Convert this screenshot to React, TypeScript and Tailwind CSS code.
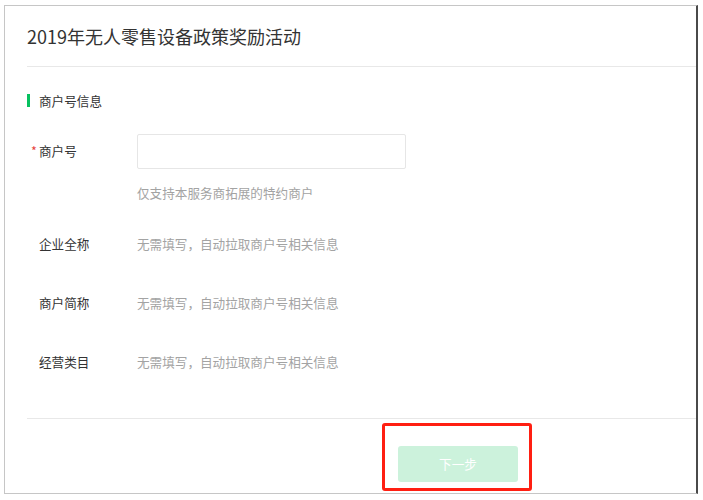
import React from "react";

const font = { fontFamily: '"Noto Sans CJK SC", "Noto Sans", sans-serif' };

function Row({ label, value }: { label: string; value: string }) {
  return (
    <div className="flex h-[20px] items-center text-[12.6px] leading-[20px]">
      <div className="w-[110px] pl-[12px] text-[#333]">{label}</div>
      <div className="text-[#a3a3a3]">{value}</div>
    </div>
  );
}

export default function App() {
  return (
    <div className="h-[500px] w-[703px] bg-white pl-[4px] pt-[5px]" style={font}>
      <div className="flex h-[489px] w-[694px] flex-col border border-[#c6c6c6] border-r-2 border-r-[#4a4a4a] bg-white pl-[22px]">
        <div className="flex h-[61px] shrink-0 items-center border-b border-[#e8e8e8] text-[18px] text-[#333]">
          2019年无人零售设备政策奖励活动
        </div>

        <div className="mt-[27px] flex h-[13px] items-center">
          <div className="h-[13px] w-[3px] bg-[#07c160]" />
          <div className="ml-[9px] text-[12.6px] leading-[13px] text-[#333]">商户号信息</div>
        </div>

        <div className="mt-[27px] flex h-[35px] items-center">
          <div className="flex w-[110px] items-center pl-[4px] text-[12.6px] text-[#333]">
            <span className="w-[8px] text-[#e64340]">*</span>
            <span>商户号</span>
          </div>
          <div className="h-[35px] w-[269px] rounded-[2px] border border-[#e6e6e6] bg-white" />
        </div>

        <div className="mt-[14px] pl-[110px] text-[12.6px] leading-[20px] text-[#a3a3a3]">
          仅支持本服务商拓展的特约商户
        </div>

        <div className="mt-[31px]">
          <Row label="企业全称" value="无需填写，自动拉取商户号相关信息" />
        </div>
        <div className="mt-[39px]">
          <Row label="商户简称" value="无需填写，自动拉取商户号相关信息" />
        </div>
        <div className="mt-[39px]">
          <Row label="经营类目" value="无需填写，自动拉取商户号相关信息" />
        </div>

        <div className="mt-[46px] h-px bg-[#e8e8e8]" />

        <div className="ml-[355px] mt-[4px] h-[68px] w-[150px] rounded-[3px] border-[3px] border-[#ff1f12] pl-[13px] pt-[20px]">
          <button className="flex h-[36px] w-[120px] items-center justify-center rounded-[3px] bg-[#ccf2dc] text-[12.6px] text-white">
            下一步
          </button>
        </div>
      </div>
    </div>
  );
}
